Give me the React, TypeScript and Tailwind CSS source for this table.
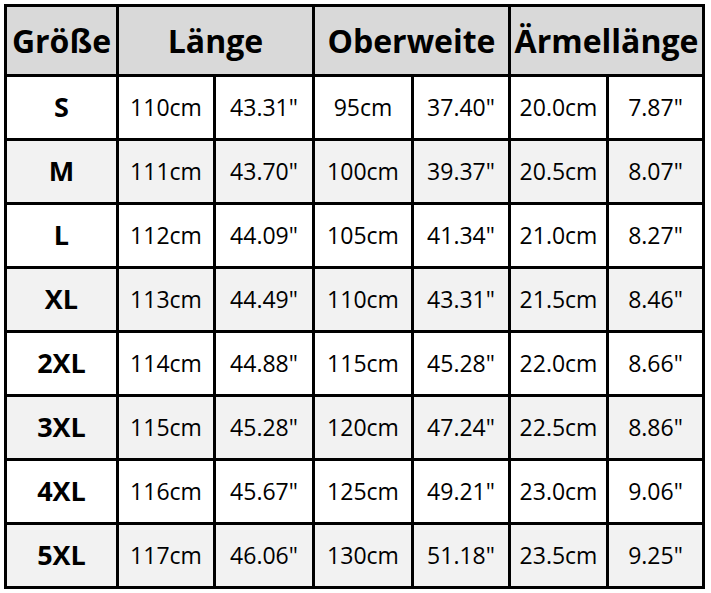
import React from "react";

const rows: [string, string, string, string, string, string, string][] = [
  ["S", "110cm", '43.31"', "95cm", '37.40"', "20.0cm", '7.87"'],
  ["M", "111cm", '43.70"', "100cm", '39.37"', "20.5cm", '8.07"'],
  ["L", "112cm", '44.09"', "105cm", '41.34"', "21.0cm", '8.27"'],
  ["XL", "113cm", '44.49"', "110cm", '43.31"', "21.5cm", '8.46"'],
  ["2XL", "114cm", '44.88"', "115cm", '45.28"', "22.0cm", '8.66"'],
  ["3XL", "115cm", '45.28"', "120cm", '47.24"', "22.5cm", '8.86"'],
  ["4XL", "116cm", '45.67"', "125cm", '49.21"', "23.0cm", '9.06"'],
  ["5XL", "117cm", '46.06"', "130cm", '51.18"', "23.5cm", '9.25"'],
];

export default function App() {
  return (
    <div
      className="w-[711px] h-[593px] bg-white pt-[4px] pl-[4px]"
      style={{ fontFamily: '"Open Sans", "Noto Sans", sans-serif' }}
    >
      <div className="inline-grid grid-cols-[109px_94px_96px_96px_94px_95px_93px] grid-rows-[67px_repeat(8,61px)] gap-[3px] bg-black p-[3px] text-black">
        <div className="bg-[#d9d9d9] flex items-center justify-center text-[32px] font-bold">Größe</div>
        <div className="col-span-2 bg-[#d9d9d9] flex items-center justify-center text-[32px] font-bold">Länge</div>
        <div className="col-span-2 bg-[#d9d9d9] flex items-center justify-center text-[32px] font-bold">Oberweite</div>
        <div className="col-span-2 bg-[#d9d9d9] flex items-center justify-center text-[32px] font-bold whitespace-nowrap">Ärmellänge</div>
        {rows.map((r, i) => {
          const bg = i % 2 === 1 ? "bg-[#f2f2f2]" : "bg-white";
          return (
            <React.Fragment key={r[0]}>
              <div className={`${bg} flex items-center justify-center text-[27px] font-bold`}>{r[0]}</div>
              {r.slice(1).map((c, j) => (
                <div key={j} className={`${bg} flex items-center justify-center text-[23px] whitespace-nowrap`}>
                  {c}
                </div>
              ))}
            </React.Fragment>
          );
        })}
      </div>
    </div>
  );
}
